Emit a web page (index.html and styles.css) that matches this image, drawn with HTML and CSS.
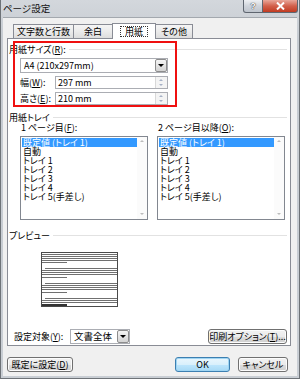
FILE: index.html
```html
<!DOCTYPE html>
<html lang="ja">
<head>
  <meta charset="UTF-8">
  <title>ページ設定</title>
  <link rel="stylesheet" href="styles.css">
</head>
<body>
  <div class="window">
    <div class="titlebar">
      <span class="title">ページ設定</span>
      <div class="caption-btns">
        <span class="cap-help">?</span>
        <span class="cap-close">
          <svg width="9" height="8" viewBox="0 0 9 8"><path d="M1 0.5 L8 7.5 M8 0.5 L1 7.5" stroke="#fff" stroke-width="2"/></svg>
        </span>
      </div>
    </div>

    <div class="client">
      <div class="tabs">
        <div class="tab t1">文字数と行数</div>
        <div class="tab t2">余白</div>
        <div class="tab active"><span class="focus">用紙</span></div>
        <div class="tab t4">その他</div>
      </div>

      <div class="panel">
        <div class="highlight"></div>

        <div class="group-title"><span>用紙サイズ(<u>R</u>):</span><i></i></div>
        <div class="combo size-combo">
          <span class="combo-text">A4 (210x297mm)</span>
          <span class="drop-btn"></span>
        </div>
        <div class="field-row first">
          <label>幅(<u>W</u>):</label>
          <div class="spin"><span class="spin-text">297 mm</span><span class="spin-btns"><b class="up"></b><b class="down"></b></span></div>
        </div>
        <div class="field-row">
          <label>高さ(<u>E</u>):</label>
          <div class="spin"><span class="spin-text">210 mm</span><span class="spin-btns"><b class="up"></b><b class="down"></b></span></div>
        </div>

        <div class="group-title tray-title"><span>用紙トレイ</span><i></i></div>
        <div class="trays">
          <div class="tray">
            <div class="tray-label">1 ページ目(<u>F</u>):</div>
            <div class="listbox">
              <ul>
                <li class="selected">既定値 (トレイ 1)</li>
                <li>自動</li>
                <li>トレイ 1</li>
                <li>トレイ 2</li>
                <li>トレイ 3</li>
                <li>トレイ 4</li>
                <li>トレイ 5(手差し)</li>
              </ul>
              <div class="vscroll"><b class="up"></b><b class="down"></b></div>
            </div>
          </div>
          <div class="tray">
            <div class="tray-label">2 ページ目以降(<u>O</u>):</div>
            <div class="listbox">
              <ul>
                <li class="selected">既定値 (トレイ 1)</li>
                <li>自動</li>
                <li>トレイ 1</li>
                <li>トレイ 2</li>
                <li>トレイ 3</li>
                <li>トレイ 4</li>
                <li>トレイ 5(手差し)</li>
              </ul>
              <div class="vscroll"><b class="up"></b><b class="down"></b></div>
            </div>
          </div>
        </div>

        <div class="group-title preview-title"><span>プレビュー</span><i></i></div>
        <svg class="preview" width="77" height="55" viewBox="0 0 77 55" shape-rendering="crispEdges">
          <rect x="0.5" y="0.5" width="76" height="54" fill="#fff" stroke="#4a4a4a"/>
          <g stroke="#707070" stroke-width="1">
            <path d="M1 2.5H76 M1 4.5H76 M1 6.5H76 M1 8.5H76 M1 10.5H26"/>
            <path d="M4 16.5H76 M1 18.5H76 M1 20.5H76 M1 22.5H76 M1 25.5H26"/>
            <path d="M4 31.5H76 M1 33.5H76 M1 35.5H76 M1 37.5H76 M1 40.5H26"/>
            <path d="M4 46.5H76 M1 48.5H76 M1 50.5H76"/>
          </g>
          <path d="M1 53H26" stroke="#333" stroke-width="2"/>
        </svg>

        <div class="apply-row">
          <label>設定対象(<u>Y</u>):</label>
          <div class="combo apply-combo">
            <span class="combo-text">文書全体</span>
            <span class="drop-btn"></span>
          </div>
          <button class="btn print-btn">印刷オプション(<u>T</u>)...</button>
        </div>
      </div>

      <div class="footer">
        <button class="btn default-btn">既定に設定(<u>D</u>)</button>
        <button class="btn ok-btn">OK</button>
        <button class="btn cancel-btn">キャンセル</button>
      </div>
    </div>
  </div>
</body>
</html>
```

FILE: styles.css
```css
body {
  margin: 0;
  width: 300px;
  height: 379px;
  overflow: hidden;
  font-family: "Noto Sans CJK JP", "Liberation Sans", sans-serif;
  font-size: 9px;
  font-feature-settings: "palt";
  color: #000;
}

u {
  text-decoration: underline;
  text-underline-offset: 1px;
}

.window {
  box-sizing: border-box;
  height: 379px;
  display: flex;
  flex-direction: column;
  padding: 0 2px 2px 2px;
  background: linear-gradient(180deg, #d3d7dc, #c6cbd1 40px, #c9ced4);
  border: 1px solid #6e7378;
  border-top: none;
}

.titlebar {
  height: 17px;
  display: flex;
  align-items: flex-start;
}

.title {
  padding: 3px 0 0 0;
  font-size: 9.5px;
  line-height: 11px;
  color: #111;
}

.caption-btns {
  margin-left: auto;
  margin-right: -1px;
  display: flex;
}

.cap-help,
.cap-close {
  box-sizing: border-box;
  height: 13px;
  display: flex;
  align-items: center;
  justify-content: center;
  border: 1px solid #5f6670;
  border-top: none;
}

.cap-help {
  width: 20px;
  border-radius: 0 0 0 3px;
  background: linear-gradient(180deg, #eef0f3, #cfd4db 50%, #bfc5cd);
  color: #fff;
  font-family: "Liberation Sans", sans-serif;
  font-weight: bold;
  font-size: 9px;
  text-shadow: 0 0 1px #333, 0 0 1px #333;
}

.cap-close {
  width: 35px;
  border-left: none;
  border-radius: 0 0 3px 0;
  background: linear-gradient(180deg, #e9a79a, #d2604b 50%, #c13b22);
}

.client {
  flex: 1;
  display: flex;
  flex-direction: column;
  background: #f0f0f0;
  border-top: 1px solid #a3a8ae;
  padding: 5px 6px 0 4px;
}

/* tabs */
.tabs {
  height: 15px;
  display: flex;
  align-items: flex-end;
  padding-left: 6px;
  position: relative;
  z-index: 1;
}

.tab {
  box-sizing: border-box;
  height: 14px;
  margin-left: -1px;
  border: 1px solid #898c95;
  border-bottom: none;
  background: linear-gradient(180deg, #f5f5f5, #ebebeb 50%, #dddddd);
  text-align: center;
  line-height: 13px;
}

.t1 { width: 61px; margin-left: 0; }
.t2 { width: 40px; }
.t4 { width: 38px; }

.tab.active {
  width: 44px;
  height: 16px;
  margin-bottom: -1px;
  background: #fff;
  display: flex;
  align-items: center;
  justify-content: center;
}

.focus {
  border: 1px dotted #333;
  padding: 0 4px;
  line-height: 9px;
}

/* panel */
.panel {
  position: relative;
  box-sizing: border-box;
  height: 308px;
  display: flex;
  flex-direction: column;
  background: #fff;
  border: 1px solid #898c95;
  padding: 0 3px 0 1px;
}

.highlight {
  position: absolute;
  left: 5px;
  top: 2px;
  width: 160px;
  height: 62px;
  border: 2px solid #ef1010;
}

.group-title {
  height: 11px;
  display: flex;
  align-items: center;
  margin-top: 5px;
}

.group-title i {
  flex: 1;
  height: 1px;
  margin-left: 3px;
  background: #e2e2e2;
}

.tray-title { margin-top: 7px; }
.preview-title { margin-top: 10px; }

.combo {
  box-sizing: border-box;
  display: flex;
  align-items: center;
  border: 1px solid #abadb3;
  background: #fff;
}

.combo-text {
  flex: 1;
  padding-left: 3px;
  line-height: 11px;
  white-space: nowrap;
}

.size-combo {
  width: 148px;
  height: 15px;
  margin: 3px 0 0 11px;
}

.drop-btn {
  box-sizing: border-box;
  flex: none;
  width: 12px;
  height: 13px;
  border: 1px solid #8d8d8d;
  border-radius: 2px;
  background: linear-gradient(180deg, #f4f4f4, #e4e4e4 50%, #d3d3d3);
  position: relative;
}

.drop-btn::after {
  content: "";
  position: absolute;
  left: 2px;
  top: 4px;
  border-left: 3px solid transparent;
  border-right: 3px solid transparent;
  border-top: 3px solid #000;
}

.field-row {
  display: flex;
  align-items: center;
  margin: 3px 0 0 11px;
}

.field-row label {
  width: 35px;
}

.spin {
  box-sizing: border-box;
  width: 113px;
  height: 13px;
  display: flex;
  border: 1px solid #abadb3;
}

.spin-text {
  flex: 1;
  padding-left: 2px;
  line-height: 11px;
}

.spin-btns {
  width: 11px;
  display: flex;
  flex-direction: column;
  background: #f4f4f4;
  border-left: 1px solid #d8d8d8;
}

.spin-btns b,
.vscroll b {
  flex: 1;
  position: relative;
}

.spin-btns b::after,
.vscroll b::after {
  content: "";
  position: absolute;
  left: 3px;
  border-left: 2.5px solid transparent;
  border-right: 2.5px solid transparent;
}

.spin-btns .up::after {
  top: 2px;
  border-bottom: 2.5px solid #a6b1c6;
}

.spin-btns .down::after {
  top: 1px;
  border-top: 2.5px solid #a6b1c6;
}

/* trays */
.trays {
  display: flex;
  gap: 9px;
  margin-left: 11px;
}

.tray-label {
  line-height: 10px;
  padding-left: 1px;
}

.listbox {
  box-sizing: border-box;
  width: 128px;
  height: 84px;
  margin-top: 3px;
  display: flex;
  border: 1px solid #828790;
}

.listbox ul {
  flex: 1;
  list-style: none;
  margin: 0;
  padding: 1px 0 0 1px;
}

.listbox li {
  height: 9px;
  line-height: 9px;
  padding-left: 1px;
  white-space: nowrap;
}

.listbox li.selected {
  background: #3399ff;
  color: #fff;
}

.vscroll {
  width: 10px;
  display: flex;
  flex-direction: column;
  justify-content: space-between;
  background: #fbfbfb;
}

.vscroll b {
  flex: none;
  height: 9px;
}

.vscroll .up::after {
  top: 3px;
  border-bottom: 2.5px solid #bcbcbc;
}

.vscroll .down::after {
  top: 3px;
  border-top: 2.5px solid #bcbcbc;
}

.preview {
  display: block;
  margin: 11px 0 0 32px;
}

.apply-row {
  display: flex;
  align-items: center;
  margin-top: auto;
  margin-bottom: 1px;
  padding-left: 5px;
}

.apply-row label {
  width: 56px;
}

.apply-combo {
  width: 60px;
  height: 15px;
}

.apply-combo .combo-text {
  font-size: 9.5px;
  padding-left: 3px;
}

/* buttons */
.btn {
  box-sizing: border-box;
  height: 15px;
  padding: 0;
  font: inherit;
  line-height: 12px;
  color: #000;
  border: 1px solid #707070;
  border-radius: 3px;
  background: linear-gradient(180deg, #f2f2f2, #ebebeb 50%, #dddddd 51%, #cfcfcf);
  box-shadow: inset 0 0 0 1px #fcfcfc;
}

.print-btn {
  width: 79px;
  margin-left: auto;
}

.footer {
  display: flex;
  gap: 8px;
  margin-top: 11px;
  padding-right: 3px;
}

.default-btn { width: 66px; }

.ok-btn {
  width: 55px;
  margin-left: auto;
  border-color: #3c7fb1;
  box-shadow: inset 0 0 0 1px #9fd5f3;
  background: linear-gradient(180deg, #eaf6fd, #d9f0fc 50%, #bee6fd 51%, #a7d9f5);
}

.cancel-btn { width: 50px; }
```
